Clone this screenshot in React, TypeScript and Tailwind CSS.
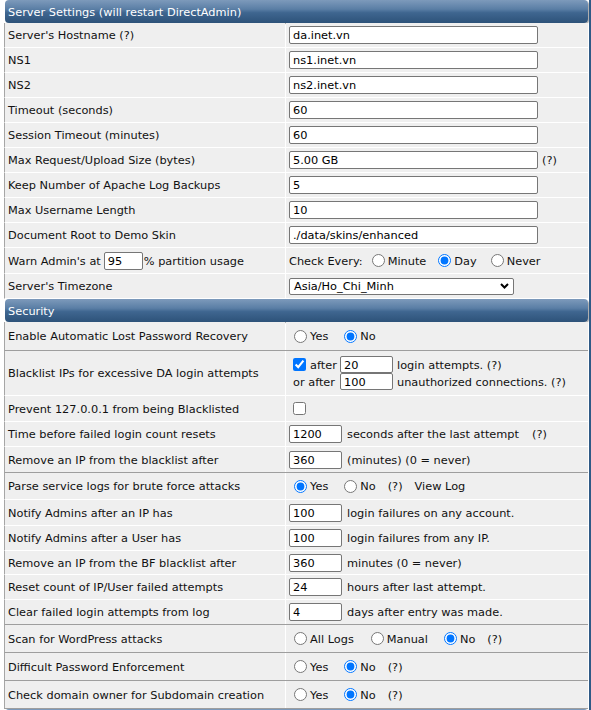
import type { ReactNode } from 'react';

type RowProps = {
  label: ReactNode;
  children?: ReactNode;
  h: string;
  grey?: boolean;
};

function Header({ title = '' }: { title?: string }) {
  return (
    <div className="ml-[1px] h-[23px] flex items-center pl-[3px] text-white rounded-[4px] bg-[linear-gradient(to_bottom,#7d9abb_0%,#5a7ea5_40%,#3f6690_55%,#2d5279_100%)] shadow-[1px_1px_1px_rgba(0,0,0,0.35)]">
      {title}
    </div>
  );
}

function Row({ label, children, h, grey }: RowProps) {
  return (
    <div className={`flex border-l border-b border-l-[#a6a6a6] ${grey ? 'border-b-[#9e9e9e]' : 'border-b-white'}`}>
      <div className={`${h} w-[280px] shrink-0 flex items-center pl-[3px] bg-[#efefef]`}>{label}</div>
      <div className={`${h} flex-1 ml-[1px] flex items-center pl-[3px] bg-[#efefef]`}>{children}</div>
    </div>
  );
}

function TextInput({ value, w, h = 'h-[18px]', className = '' }: { value: string; w: string; h?: string; className?: string }) {
  return (
    <input
      readOnly
      value={value}
      className={`${w} ${h} ${className} shrink-0 border border-[#767676] rounded-[2px] bg-white px-[3px] text-black outline-none`}
    />
  );
}

function Radio({ name, label, checked = false, ml }: { name: string; label: string; checked?: boolean; ml: string }) {
  return (
    <label className={`flex items-center ${ml}`}>
      <input type="radio" name={name} defaultChecked={checked} className="m-0 w-[13px] h-[13px]" />
      <span className="ml-[3px]">{label}</span>
    </label>
  );
}

function YesNo({ name, yes, help = true }: { name: string; yes: boolean; help?: boolean }) {
  return (
    <div className="flex items-center">
      <Radio name={name} label="Yes" checked={yes} ml="ml-[5px]" />
      <Radio name={name} label="No" checked={!yes} ml="ml-[16px]" />
      {help && <span className="ml-[12px]">(?)</span>}
    </div>
  );
}

function Checkbox({ checked = false }: { checked?: boolean }) {
  return <input type="checkbox" defaultChecked={checked} className="m-0 ml-[4px] w-[13px] h-[13px] shrink-0" />;
}

export default function App() {
  return (
    <div className="w-[591px] h-[710px] overflow-hidden bg-white flex font-['DejaVu_Sans',Verdana,sans-serif] text-[11.33px] leading-[14px] text-[#111]">
      <div className="ml-[4px] w-[584px] shrink-0">
        <Header title="Server Settings (will restart DirectAdmin)" />
        <Row label="Server's Hostname (?)" h="h-[24px]">
          <TextInput value="da.inet.vn" w="w-[249px]" />
        </Row>
        <Row label="NS1" h="h-[24px]">
          <TextInput value="ns1.inet.vn" w="w-[249px]" />
        </Row>
        <Row label="NS2" h="h-[24px]">
          <TextInput value="ns2.inet.vn" w="w-[249px]" />
        </Row>
        <Row label="Timeout (seconds)" h="h-[24px]">
          <TextInput value="60" w="w-[249px]" />
        </Row>
        <Row label="Session Timeout (minutes)" h="h-[24px]">
          <TextInput value="60" w="w-[249px]" />
        </Row>
        <Row label="Max Request/Upload Size (bytes)" h="h-[24px]">
          <TextInput value="5.00 GB" w="w-[249px]" />
          <span className="ml-[4px]">(?)</span>
        </Row>
        <Row label="Keep Number of Apache Log Backups" h="h-[24px]">
          <TextInput value="5" w="w-[249px]" />
        </Row>
        <Row label="Max Username Length" h="h-[24px]">
          <TextInput value="10" w="w-[249px]" />
        </Row>
        <Row label="Document Root to Demo Skin" h="h-[24px]">
          <TextInput value="./data/skins/enhanced" w="w-[249px]" />
        </Row>
        <Row
          label={
            <div className="flex items-center">
              <span>Warn Admin's at</span>
              <TextInput value="95" w="w-[39px]" className="ml-[3px]" />
              <span className="ml-[1px]">% partition usage</span>
            </div>
          }
          h="h-[25px]"
        >
          <span>Check Every:</span>
          <Radio name="check" label="Minute" ml="ml-[9px]" />
          <Radio name="check" label="Day" checked ml="ml-[12px]" />
          <Radio name="check" label="Never" ml="ml-[14px]" />
        </Row>
        <Row label="Server's Timezone" h="h-[24px]">
          <div className="w-[225px] h-[17px] border border-[#767676] rounded-[2px] bg-white flex items-center justify-between pl-[4px] pr-[4px] text-black">
            <span>Asia/Ho_Chi_Minh</span>
            <svg width="9" height="6" viewBox="0 0 9 6" className="shrink-0">
              <path d="M1 1l3.5 3.5L8 1" fill="none" stroke="#000" strokeWidth="2" />
            </svg>
          </div>
        </Row>

        <Header title="Security" />
        <Row label="Enable Automatic Lost Password Recovery" h="h-[28px]" grey>
          <YesNo name="lost" yes={false} help={false} />
        </Row>
        <Row label="Blacklist IPs for excessive DA login attempts" h="h-[44px]">
          <div className="flex flex-col">
            <div className="flex items-center h-[17px]">
              <Checkbox checked />
              <span className="ml-[4px] w-[30px]">after</span>
              <TextInput value="20" w="w-[53px]" h="h-[17px]" />
              <span className="ml-[4px]">login attempts. (?)</span>
            </div>
            <div className="flex items-center h-[17px]">
              <span className="ml-[4px] w-[47px]">or after</span>
              <TextInput value="100" w="w-[53px]" h="h-[17px]" />
              <span className="ml-[4px]">unauthorized connections. (?)</span>
            </div>
          </div>
        </Row>
        <Row label="Prevent 127.0.0.1 from being Blacklisted" h="h-[25px]">
          <Checkbox />
        </Row>
        <Row label="Time before failed login count resets" h="h-[24px]">
          <TextInput value="1200" w="w-[53px]" />
          <span className="ml-[5px]">seconds after the last attempt</span>
          <span className="ml-[13px]">(?)</span>
        </Row>
        <Row label="Remove an IP from the blacklist after" h="h-[25px]" grey>
          <TextInput value="360" w="w-[53px]" />
          <span className="ml-[5px]">(minutes) (0 = never)</span>
        </Row>
        <Row label="Parse service logs for brute force attacks" h="h-[26px]">
          <YesNo name="parse" yes />
          <span className="ml-[12px]">View Log</span>
        </Row>
        <Row label="Notify Admins after an IP has" h="h-[25px]">
          <TextInput value="100" w="w-[53px]" />
          <span className="ml-[5px]">login failures on any account.</span>
        </Row>
        <Row label="Notify Admins after a User has" h="h-[24px]">
          <TextInput value="100" w="w-[53px]" />
          <span className="ml-[5px]">login failures from any IP.</span>
        </Row>
        <Row label="Remove an IP from the BF blacklist after" h="h-[23px]">
          <TextInput value="360" w="w-[53px]" />
          <span className="ml-[5px]">minutes (0 = never)</span>
        </Row>
        <Row label="Reset count of IP/User failed attempts" h="h-[24px]">
          <TextInput value="24" w="w-[53px]" />
          <span className="ml-[5px]">hours after last attempt.</span>
        </Row>
        <Row label="Clear failed login attempts from log" h="h-[24px]" grey>
          <TextInput value="4" w="w-[53px]" />
          <span className="ml-[5px]">days after entry was made.</span>
        </Row>
        <Row label="Scan for WordPress attacks" h="h-[27px]" grey>
          <Radio name="wp" label="All Logs" ml="ml-[5px]" />
          <Radio name="wp" label="Manual" ml="ml-[17px]" />
          <Radio name="wp" label="No" checked ml="ml-[16px]" />
          <span className="ml-[12px]">(?)</span>
        </Row>
        <Row label="Difficult Password Enforcement" h="h-[27px]" grey>
          <YesNo name="difficult" yes={false} />
        </Row>
        <Row label="Check domain owner for Subdomain creation" h="h-[27px]" grey>
          <YesNo name="subdomain" yes={false} />
        </Row>
        <Header />
      </div>
      <div className="w-[1px] shrink-0" />
      <div className="w-[2px] h-full shrink-0 bg-[#2f5a86]" />
    </div>
  );
}
